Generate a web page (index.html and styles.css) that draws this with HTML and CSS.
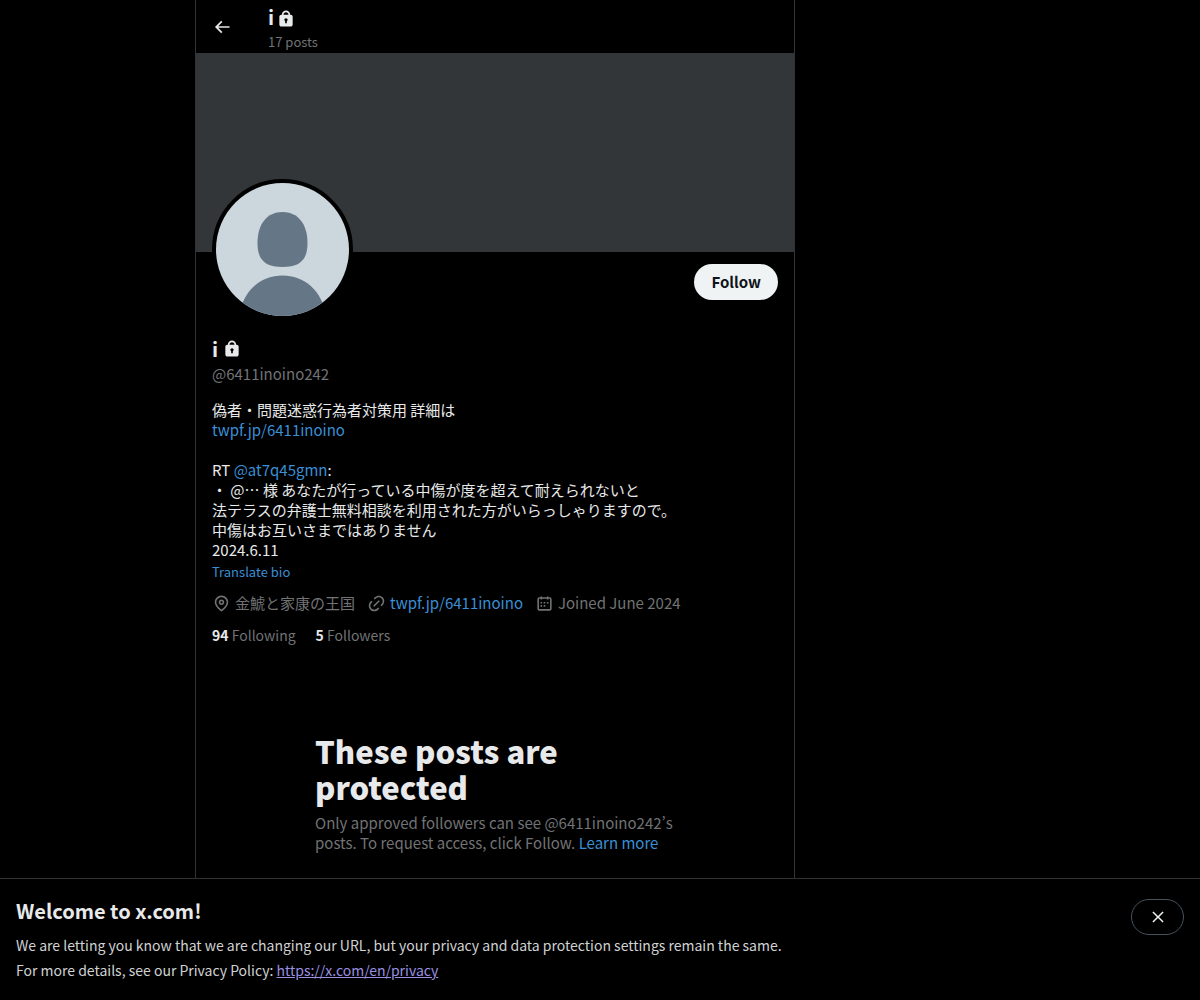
FILE: index.html
```html
<!DOCTYPE html>
<html lang="ja">
<head>
  <meta charset="UTF-8" />
  <meta name="viewport" content="width=device-width, initial-scale=1.0" />
  <title>i (@6411inoino242) / X</title>
  <link rel="stylesheet" href="styles.css">
</head>
<body>

  <div class="layout">
  <main class="column">
    <header class="topbar">
      <button class="back" type="button" aria-label="Back">
        <svg viewBox="0 0 24 24"><path d="M7.414 13l5.043 5.04-1.414 1.42L3.586 12l7.457-7.46 1.414 1.42L7.414 11H21v2H7.414z"/></svg>
      </button>
      <div class="topbar-title">
        <h2 class="name">i
          <svg class="lock" viewBox="0 0 24 24"><path d="M17.5 7H17v-.25c0-2.76-2.24-5-5-5s-5 2.24-5 5V7h-.5C5.12 7 4 8.12 4 9.5v9C4 19.88 5.12 21 6.5 21h11c1.39 0 2.5-1.12 2.5-2.5v-9C20 8.12 18.89 7 17.5 7zM13 14.73V17h-2v-2.27c-.59-.34-1-.99-1-1.73 0-1.1.9-2 2-2 1.11 0 2 .9 2 2 0 .74-.4 1.39-1 1.73zM15 7H9v-.25c0-1.66 1.35-3 3-3 1.66 0 3 1.34 3 3V7z"/></svg>
        </h2>
        <p class="post-count">17 posts</p>
      </div>
    </header>

    <div class="banner"></div>

    <section class="profile">
      <div class="profile-top">
        <svg class="avatar" viewBox="0 0 133 133" role="img" aria-label="Profile picture">
          <rect width="133" height="133" fill="#ccd6dd"/>
          <path fill="#657786" d="M66.5 29C82 29 91.5 41 91.5 60C91.5 77 84 84 66.5 84C49 84 41.5 77 41.5 60C41.5 41 51 29 66.5 29z"/>
          <path fill="#657786" d="M23 133C27 107 45 92.5 66.5 92.5S106 107 110 133z"/>
        </svg>
        <button class="follow" type="button">Follow</button>
      </div>

      <h1 class="name">i
        <svg class="lock" viewBox="0 0 24 24"><path d="M17.5 7H17v-.25c0-2.76-2.24-5-5-5s-5 2.24-5 5V7h-.5C5.12 7 4 8.12 4 9.5v9C4 19.88 5.12 21 6.5 21h11c1.39 0 2.5-1.12 2.5-2.5v-9C20 8.12 18.89 7 17.5 7zM13 14.73V17h-2v-2.27c-.59-.34-1-.99-1-1.73 0-1.1.9-2 2-2 1.11 0 2 .9 2 2 0 .74-.4 1.39-1 1.73zM15 7H9v-.25c0-1.66 1.35-3 3-3 1.66 0 3 1.34 3 3V7z"/></svg>
      </h1>
      <p class="handle">@6411inoino242</p>

      <p class="bio">偽者・問題迷惑行為者対策用 詳細は<br>
        <a href="#">twpf.jp/6411inoino</a><br>
        <br>
        RT <a href="#">@at7q45gmn</a>:<br>
        ・ @… 様 あなたが行っている中傷が度を超えて耐えられないと<br>
        法テラスの弁護士無料相談を利用された方がいらっしゃりますので。<br>
        中傷はお互いさまではありません<br>
        2024.6.11</p>
      <button class="translate" type="button">Translate bio</button>

      <ul class="meta">
        <li>
          <svg viewBox="0 0 24 24"><path d="M12 7c-1.93 0-3.5 1.57-3.5 3.5S10.07 14 12 14s3.5-1.57 3.5-3.5S13.93 7 12 7zm0 5c-.827 0-1.5-.673-1.5-1.5S11.173 9 12 9s1.5.673 1.5 1.5S12.827 12 12 12zm0-10c-4.687 0-8.5 3.813-8.5 8.5 0 5.967 7.621 11.116 7.945 11.332l.555.37.555-.37c.324-.216 7.945-5.365 7.945-11.332C20.5 5.813 16.687 2 12 2zm0 17.77c-1.665-1.241-6.5-5.196-6.5-9.27C5.5 6.916 8.416 4 12 4s6.5 2.916 6.5 6.5c0 4.073-4.835 8.028-6.5 9.27z"/></svg>
          <span>金鯱と家康の王国</span>
        </li>
        <li>
          <svg viewBox="0 0 24 24"><path d="M18.36 5.64c-1.95-1.96-5.11-1.96-7.07 0L9.88 7.05 8.46 5.64l1.42-1.42c2.73-2.73 7.16-2.73 9.9 0 2.73 2.74 2.73 7.17 0 9.9l-1.42 1.42-1.41-1.42 1.41-1.41c1.96-1.96 1.96-5.12 0-7.07zm-2.12 3.53l-7.07 7.07-1.41-1.41 7.07-7.07 1.41 1.41zm-12.02.71l1.42-1.42 1.41 1.42-1.41 1.41c-1.96 1.96-1.96 5.12 0 7.07 1.95 1.96 5.11 1.96 7.07 0l1.41-1.41 1.42 1.41-1.42 1.42c-2.73 2.73-7.16 2.73-9.9 0-2.73-2.74-2.73-7.17 0-9.9z"/></svg>
          <a href="#">twpf.jp/6411inoino</a>
        </li>
        <li>
          <svg viewBox="0 0 24 24"><path d="M7 4V3h2v1h6V3h2v1h1.5C19.89 4 21 5.12 21 6.5v12c0 1.38-1.11 2.5-2.5 2.5h-13C4.12 21 3 19.88 3 18.5v-12C3 5.12 4.12 4 5.5 4H7zm0 2H5.5c-.27 0-.5.22-.5.5v12c0 .28.23.5.5.5h13c.28 0 .5-.22.5-.5v-12c0-.28-.22-.5-.5-.5H17v1h-2V6H9v1H7V6zm0 6h2v-2H7v2zm0 4h2v-2H7v2zm4-4h2v-2h-2v2zm0 4h2v-2h-2v2zm4-4h2v-2h-2v2z"/></svg>
          <span>Joined June 2024</span>
        </li>
      </ul>

      <div class="counts">
        <a href="#"><strong>94</strong> Following</a>
        <a href="#"><strong>5</strong> Followers</a>
      </div>
    </section>

    <section class="protected">
      <h2>These posts are protected</h2>
      <p>Only approved followers can see @6411inoino242’s posts. To request access, click Follow. <a href="#">Learn more</a></p>
    </section>
  </main>
  </div>

  <aside class="notice">
    <div class="notice-text">
      <h2>Welcome to x.com!</h2>
      <p>We are letting you know that we are changing our URL, but your privacy and data protection settings remain the same.</p>
      <p>For more details, see our Privacy Policy: <a href="#">https://x.com/en/privacy</a></p>
    </div>
    <button class="close" type="button" aria-label="Close">
      <svg viewBox="0 0 24 24"><path d="M10.59 12L4.54 5.96l1.42-1.42L12 10.59l6.04-6.05 1.42 1.42L13.41 12l6.05 6.04-1.42 1.42L12 13.41l-6.04 6.05-1.42-1.42L10.59 12z"/></svg>
    </button>
  </aside>

</body>
</html>
```
FILE: styles.css
```css
* {
  margin: 0;
  padding: 0;
  box-sizing: border-box;
}
body {
  display: flex;
  flex-direction: column;
  min-height: 100vh;
  background-color: #000;
  color: #e7e9ea;
  font-family: "Noto Sans CJK JP", sans-serif;
  font-size: 15px;
  line-height: 20px;
}
a {
  color: #3a8fd6;
  text-decoration: none;
}
button {
  font-family: inherit;
  cursor: pointer;
}
svg {
  display: block;
  fill: currentColor;
}
/* empty side columns, the right one takes twice the room and a bit */
.layout {
  flex: 1;
  display: grid;
  grid-template-columns: 13fr minmax(auto, 600px) 27fr;
}
.column {
  grid-column: 2;
  border-left: 1px solid #2f3336;
  border-right: 1px solid #2f3336;
}

/* top bar */
.topbar {
  display: flex;
  align-items: center;
  height: 53px;
  padding: 0 16px;
}
.back {
  width: 56px;
  background: none;
  border: none;
  color: #e7e9ea;
}
.back svg {
  width: 20px;
  height: 20px;
}
.name {
  display: flex;
  align-items: center;
  gap: 4px;
  font-size: 20px;
  line-height: 24px;
}
.lock {
  width: 20px;
  height: 20px;
}
.topbar .name {
  gap: 2px;
  line-height: 30px;
}
.topbar .lock {
  margin-top: 4px;
}
.post-count {
  color: #717375;
  font-size: 13px;
  line-height: 20px;
}

/* profile */
.banner {
  height: 199px;
  background-color: #333639;
}
.profile {
  padding: 12px 16px;
}
.profile-top {
  display: flex;
  justify-content: space-between;
  align-items: flex-start;
}
.avatar {
  width: 141px;
  height: 141px;
  margin-top: -85px;
  border: 4px solid #000;
  border-radius: 50%;
  background-color: #000;
}
.follow {
  height: 36px;
  padding: 0 17px 2px;
  border: none;
  border-radius: 18px;
  background-color: #eff3f4;
  color: #0f1419;
  font-size: 15px;
  font-weight: 700;
}
.profile .name {
  margin-top: 17px;
}
.handle {
  margin-top: 3px;
  color: #717375;
}
.bio {
  margin-top: 16px;
}
.translate {
  display: block;
  margin-top: 4px;
  background: none;
  border: none;
  color: #3a8fd6;
  font-size: 13px;
  line-height: 16px;
}
.meta {
  display: flex;
  flex-wrap: wrap;
  gap: 12px;
  margin-top: 13px;
  color: #717375;
  list-style: none;
}
.meta li {
  display: flex;
  align-items: center;
  gap: 4px;
}
.meta svg {
  width: 19px;
  height: 19px;
}
.counts {
  display: flex;
  gap: 20px;
  margin-top: 12px;
  font-size: 14px;
}
.counts a {
  color: #717375;
}
.counts strong {
  color: #e7e9ea;
}

/* protected message */
.protected {
  max-width: 360px;
  margin: 76px auto 0;
  color: #717375;
}
.protected h2 {
  margin-bottom: 8px;
  color: #e7e9ea;
  font-size: 31px;
  font-weight: 800;
  line-height: 36px;
}

/* bottom notice */
.notice {
  display: flex;
  justify-content: space-between;
  align-items: flex-start;
  padding: 20px 16px 17px;
  border-top: 1px solid #2f3336;
  color: #d0d2d3;
}
.notice h2 {
  margin-bottom: 10px;
  color: #e7e9ea;
  font-size: 20px;
  line-height: 24px;
}
.notice p {
  font-size: 14px;
  line-height: 25px;
}
.notice a {
  color: #9a8fe0;
  text-decoration: underline;
}
.close {
  display: flex;
  align-items: center;
  justify-content: center;
  width: 53px;
  height: 36px;
  background: none;
  border: 1px solid #47525b;
  border-radius: 18px;
  color: #eff3f4;
}
.close svg {
  width: 18px;
  height: 18px;
}
```
